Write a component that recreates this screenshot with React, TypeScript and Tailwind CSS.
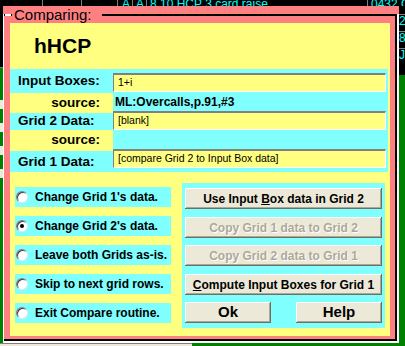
import React from 'react';

/** Dialog colours */
const PINK = 'bg-[#ff8080]';

const Field: React.FC<{ children: React.ReactNode }> = ({ children }) => (
  <div className="flex h-[19px] items-center border-t-2 border-l border-b border-r border-t-[#808080] border-l-[#808080] border-b-white border-r-white bg-[#ffff80] pl-[4px] text-[10.5px] text-black">
    {children}
  </div>
);

const Radio: React.FC<{ label: string; checked?: boolean }> = ({ label, checked }) => (
  <div className="flex h-[20px] items-center bg-[#80ffff] pl-[1px]">
    <div className="flex h-[12px] w-[12px] items-center justify-center rounded-full border border-t-[#808080] border-l-[#808080] border-b-[#e8e8e8] border-r-[#e8e8e8] bg-white shadow-[inset_1px_1px_0_#404040]">
      {checked && <div className="h-[4px] w-[4px] rounded-full bg-black" />}
    </div>
    <span className="ml-[7px] text-[12px] font-bold text-black">{label}</span>
  </div>
);

const Button: React.FC<{ children: React.ReactNode; disabled?: boolean; big?: boolean; className?: string }> = ({
  children,
  disabled,
  big,
  className = '',
}) => (
  <div
    className={`flex h-[21px] items-center justify-center bg-[#ece9d8] shadow-[inset_-1px_-1px_0_#716f64,inset_1px_1px_0_#ffffff,inset_-2px_-2px_0_#aca899] font-bold ${
      big ? 'text-[15px]' : 'text-[12px]'
    } ${disabled ? 'text-[#aca899] [text-shadow:1px_1px_0_#ffffff]' : 'text-black'} ${className}`}
  >
    {children}
  </div>
);

export default function App() {
  return (
    <div className="flex h-[346px] w-[405px] flex-col overflow-hidden bg-black font-['Liberation_Sans',Arial,sans-serif]">
      {/* app grid behind the dialog: top strip */}
      <div className="flex h-[6px] shrink-0 overflow-hidden text-[12px] leading-none text-[#00ffff]">
        <div className="w-[43px] shrink-0 border-r border-[#808080]" />
        <div className="w-[39px] shrink-0 border-r border-[#808080]" />
        <div className="w-[36px] shrink-0 border-r border-[#808080]" />
        <div className="w-[15px] shrink-0 border-r border-[#808080] pl-[4px]"><div className="-mt-[2px]">A</div></div>
        <div className="w-[14px] shrink-0 border-r border-[#808080] pl-[3px]"><div className="-mt-[2px]">A</div></div>
        <div className="w-[221px] shrink-0 border-r border-[#808080] pl-[3px]"><div className="-mt-[2px] whitespace-nowrap">8 10 HCP 3 card raise</div></div>
        <div className="w-[37px] shrink-0 pl-[3px]"><div className="-mt-[2px] whitespace-nowrap">0432 Q</div></div>
      </div>

      <div className="flex h-[337px] shrink-0">
        {/* left edge of the grid */}
        <div className="flex w-[3px] shrink-0 flex-col">
          <div className="h-[62px] border-b border-[#808080] bg-black" />
          <div className="flex flex-1 flex-col gap-[14px] bg-[#008000] pt-[32px]">
            <div className="h-[9px] bg-[#ece9d8]" />
            <div className="h-[9px] bg-[#ece9d8]" />
            <div className="h-[9px] bg-[#ece9d8]" />
            <div className="h-[9px] bg-[#ece9d8]" />
          </div>
        </div>

        {/* dialog */}
        <div className={`flex w-[396px] shrink-0 flex-col ${PINK}`}>
          <div className="h-[8px]" />
          <div className="relative flex-1 border-l border-r-2 border-b-2 border-white">
            <div className="flex h-full flex-col border-t-2 border-r-2 border-b-2 border-black pl-[6px] pr-[5px] pt-[7px] pb-[3px]">
              <div className="flex h-[313px] w-[380px] flex-col bg-[#ffff80]">
                <div className="h-[46px] pl-[24px] pt-[12px] text-[21px] font-bold leading-none text-black">hHCP</div>

                <div className="flex h-[103px] pr-[2px]">
                  <div className="flex w-[103px] flex-col text-[13.5px] font-bold text-black">
                    <div className="flex h-[24px] items-center bg-[#80ffff] pl-[8px]">Input Boxes:</div>
                    <div className="flex h-[20px] items-center justify-end pr-[13px]">source:</div>
                    <div className="flex h-[17px] items-center bg-[#80ffff] pl-[8px]">Grid 2 Data:</div>
                    <div className="flex h-[21px] items-center justify-end pr-[13px]">source:</div>
                    <div className="flex h-[21px] items-start bg-[#80ffff] pl-[8px] pt-[1px]">Grid 1 Data:</div>
                  </div>
                  <div className="flex flex-1 flex-col bg-[#80ffff] pt-[4px] pr-[2px]">
                    <Field>1+i</Field>
                    <div className="flex h-[19px] items-center pl-[2px] text-[12px] font-bold text-black">ML:Overcalls,p.91,#3</div>
                    <Field>[blank]</Field>
                    <div className="h-[19px]" />
                    <Field>[compare Grid 2 to Input Box data]</Field>
                  </div>
                </div>

                <div className="h-[11px]" />

                <div className="flex gap-[11px] pl-[5px]">
                  <div className="flex w-[156px] flex-col gap-[9px] pt-[4px]">
                    <Radio label="Change Grid 1's data." />
                    <Radio label="Change Grid 2's data." checked />
                    <Radio label="Leave both Grids as-is." />
                    <Radio label="Skip to next grid rows." />
                    <Radio label="Exit Compare routine." />
                  </div>
                  <div className="flex h-[145px] w-[203px] flex-col bg-[#80ffff] px-[3px] pt-[5px]">
                    <Button>
                      Use Input&nbsp;<span className="underline">B</span>ox data in Grid 2
                    </Button>
                    <Button disabled className="mt-[8px]">Copy Grid 1 data to Grid 2</Button>
                    <Button disabled className="mt-[7px]">Copy Grid 2 data to Grid 1</Button>
                    <Button className="mt-[8px]">
                      <span className="underline">C</span>ompute Input Boxes for Grid 1
                    </Button>
                    <div className="mt-[7px] flex justify-between">
                      <Button big className="w-[86px]">Ok</Button>
                      <Button big className="w-[86px]">Help</Button>
                    </div>
                  </div>
                </div>
              </div>
            </div>
            {/* group box caption */}
            <div className="absolute top-0 left-[1px] h-[2px] w-[6px] bg-white" />
            <div className={`absolute -top-[7px] left-[8px] pl-[2px] pr-[10px] text-[15px] leading-none text-black ${PINK}`}>
              Comparing:
            </div>
          </div>
        </div>

        {/* right edge of the grid */}
        <div className="flex w-[6px] shrink-0 flex-col">
          <div className="flex h-[69px] flex-col gap-[4px] overflow-hidden bg-black pt-[8px] text-[12px] leading-none text-[#00ffff]">
            <div className="border-t border-[#808080] whitespace-nowrap">2-I</div>
            <div className="border-t border-[#808080] whitespace-nowrap">82</div>
            <div className="border-t border-[#808080] whitespace-nowrap">J1</div>
          </div>
          <div className="flex-1 bg-[#008000]" />
        </div>
      </div>

      <div className="flex h-[3px] shrink-0">
        <div className="w-[192px] border-t border-[#808080] bg-[#ece9d8]" />
        <div className="flex-1 bg-[#008000]" />
      </div>
    </div>
  );
}
